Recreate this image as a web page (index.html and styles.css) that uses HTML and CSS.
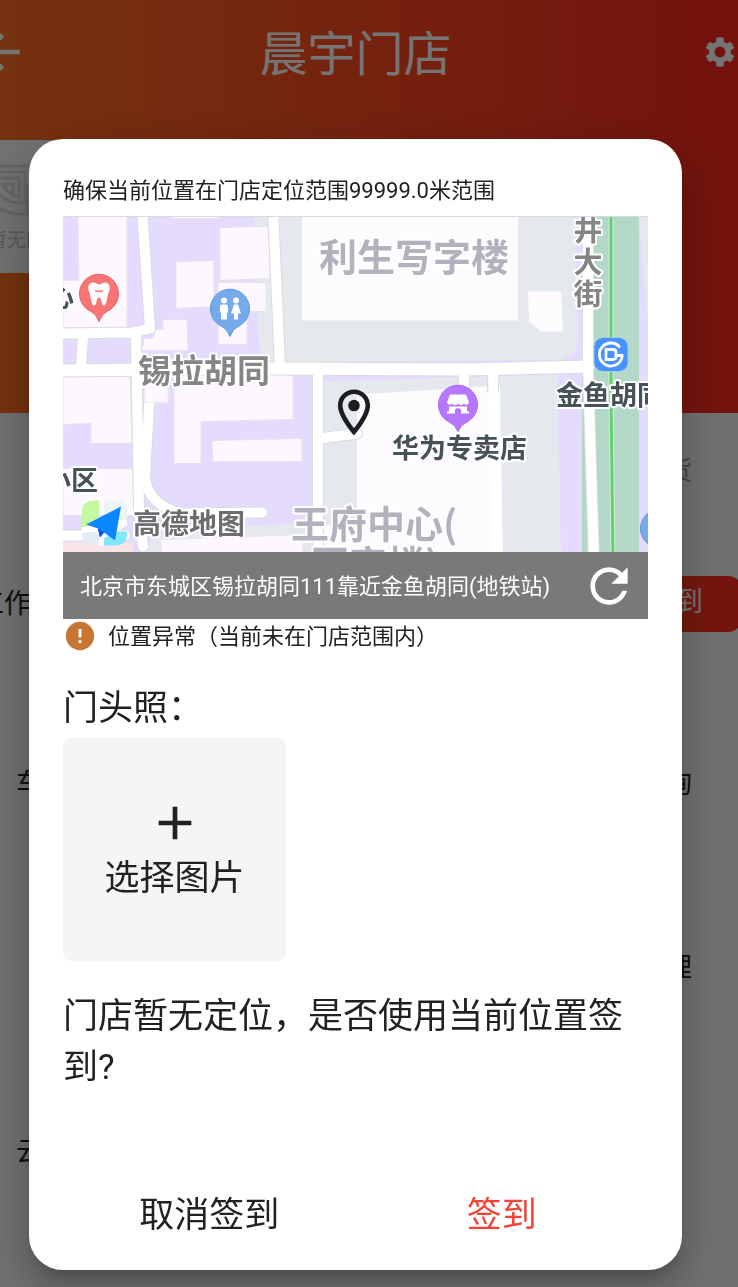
FILE: index.html
```
<!DOCTYPE html>
<html lang="zh-CN">
<head>
<meta charset="utf-8">
<meta name="viewport" content="width=device-width, initial-scale=1">
<title>晨宇门店</title>
<link rel="stylesheet" href="styles.css">
</head>
<body>
<div class="page">
  <div class="hero">
    <header class="topbar">
      <a class="back" href="#" aria-label="返回"><svg viewBox="0 0 24 24"><path d="M20 11H7.83l5.59-5.59L12 4l-8 8 8 8 1.41-1.41L7.83 13H20v-2z"/></svg></a>
      <h1 class="title">晨宇门店</h1>
      <button class="settings" aria-label="设置"><svg viewBox="0 0 24 24"><path d="M19.14 12.94c.04-.3.06-.61.06-.94 0-.32-.02-.64-.07-.94l2.03-1.58a.49.49 0 0 0 .12-.61l-1.92-3.32a.488.488 0 0 0-.59-.22l-2.39.96c-.5-.38-1.03-.7-1.62-.94l-.36-2.54a.484.484 0 0 0-.48-.41h-3.84c-.24 0-.43.17-.47.41l-.36 2.54c-.59.24-1.13.57-1.62.94l-2.39-.96c-.22-.08-.47 0-.59.22L2.74 8.87c-.12.21-.08.47.12.61l2.03 1.58c-.05.3-.09.63-.09.94s.02.64.07.94l-2.03 1.58a.49.49 0 0 0-.12.61l1.92 3.32c.12.22.37.29.59.22l2.39-.96c.5.38 1.03.7 1.62.94l.36 2.54c.05.24.24.41.48.41h3.84c.24 0 .44-.17.47-.41l.36-2.54c.59-.24 1.13-.56 1.62-.94l2.39.96c.22.08.47 0 .59-.22l1.92-3.32c.12-.22.07-.47-.12-.61l-2.01-1.58zM12 15.6c-1.98 0-3.6-1.62-3.6-3.6s1.62-3.6 3.6-3.6 3.6 1.62 3.6 3.6-1.62 3.6-3.6 3.6z"/></svg></button>
    </header>
    <div class="thumb">
      <svg class="thumb-art" viewBox="0 0 90 56"><path d="M0 5H90M0 11H44V38Q44 43 36 42Q22 40 16 30M0 17H38V36Q26 34 22 23H32V34M10 40Q20 54 46 53V24M52 53V11H90M58 53V17H90M46 53H90"/></svg>
      <span>暂无图片</span>
    </div>
  </div>
  <div class="tabs"><span>货</span></div>
  <div class="work"><span>工作</span><button class="work-btn">签到</button></div>
  <div class="menu">
    <div class="menu-row"><span>车</span><span>询</span></div>
    <div class="menu-row"><span></span><span>理</span></div>
    <div class="menu-row"><span>云</span><span></span></div>
  </div>
</div>

<div class="overlay">
  <div class="dialog" role="dialog" aria-modal="true">
    <p class="hint">确保当前位置在门店定位范围99999.0米范围</p>
    <div class="map">
      <svg class="map-view" viewBox="0 0 585 336" preserveAspectRatio="xMidYMid slice" role="img" aria-label="地图">
        <rect width="585" height="336" fill="#e5dbff"/>
        <g fill="#e5e9ee">
          <path d="M191 0H512L515 121 512 134 499 143 225 146H197Z"/>
          <path d="M576 0H585V108Z"/>
          <path d="M260 165 494 158 498 336H82L89 321 192 309 260 306Z"/>
        </g>
        <path d="M521 0H576V336H519V155Z" fill="#b4d8c7"/>
        <g fill="#fdf7ff" stroke="#e7e4ea">
          <path d="M15 0H64V115L0 111V64H16Z"/>
          <path d="M109-2H155V2H109Z"/>
          <path d="M113 45 151 44V90L113 92Z"/>
          <path d="M157 11 206 10 207 62 157 64Z"/>
          <path d="M155 66H203V95H184V128H155Z"/>
          <path d="M100 103H124L125 134H79L81 122H90L92 113H100Z"/>
          <path d="M0 160 67 158 69 227H28V207L0 208Z"/>
          <path d="M111 158H230V203L138 205V247H111Z"/>
          <path d="M149 224 239 222V245H150Z"/>
          <path d="M0 252H70L73 299H0Z"/>
          <path d="M98 323 240 318V338H98Z"/>
        </g>
        <g fill="#fefbff">
          <path d="M239 0H455V104H239Z"/>
          <path d="M465 75H498L500 115H478L466 105Z"/>
          <path d="M294 178 437 169 440 336H260V309L294 305Z"/>
        </g>
        <path d="M0 326H70V336H0Z" fill="#f8e3e6"/>
        <g fill="none" stroke-linejoin="round" stroke-linecap="round">
          <g stroke="#d9dbe1" stroke-width="12">
            <path d="M79-8 87 112 70 116-8 117M73 118 76 294 80 330M91 166 86 190 82 258Q83 282 105 292L115 297 199 296M20 120 18 150M210-8 217 150M255 156V345M256 222 294 217M401 155V170M430 155V174M525-8V150L531 345M-8 319H62"/>
            <path d="M-8 154 200 152 405 153 525 150" stroke-width="14"/>
          </g>
          <g stroke="#fff" stroke-width="10">
            <path d="M79-8 87 112 70 116-8 117M73 118 76 294 80 330M91 166 86 190 82 258Q83 282 105 292L115 297 199 296M20 120 18 150M210-8 217 150M255 156V345M256 222 294 217M401 155V170M430 155 433 345M525-8V150L531 345M-8 319H62"/>
            <path d="M-8 154 200 152 405 153 525 150" stroke-width="12"/>
          </g>
          <path d="M82 167H105V186H82Z" fill="#fdf7ff" stroke="#eeeaf0"/>
          <path d="M548-5V180L550 345" stroke="#d5ecd9" stroke-width="5"/>
          <path d="M548-5V180L550 345" stroke="#63d06e" stroke-width="3"/>
        </g>

        <g class="label-area">
          <text x="256" y="54">利生写字楼</text>
          <text x="228" y="321">王府中心(</text>
          <text x="248" y="361">写字楼)</text>
        </g>
        <g class="label-road">
          <text x="75" y="166">锡拉胡同</text>
          <g class="label-street"><text x="525" y="24">井</text><text x="525" y="56">大</text><text x="525" y="88">街</text></g>
        </g>
        <g class="label-poi">
          <text x="-16" y="90">心</text>
          <text x="-19" y="273">小区</text>
          <text x="329" y="241">华为专卖店</text>
          <text x="493" y="188">金鱼胡同</text>
        </g>

        <g transform="translate(36 77)">
          <path d="M0 28Q-3 20-8 18A19.500 19.500 0 1 1 8 18Q3 20 0 28Z" fill="#f97474" stroke="#e26565"/>
          <path d="M-6-11C-10-11-12-7-10-2-8 2-8 12-5 12-2 12-3 4 0 4S2 12 5 12C8 12 8 2 10-2 12-7 10-11 6-11 3-11 2-9 0-9S-3-11-6-11Z" fill="#fff"/>
          <path d="M-4-3Q0-1 4-3" fill="none" stroke="#f97474" stroke-width="1.500"/>
        </g>
        <g transform="translate(167 92)">
          <path d="M0 28Q-3 20-8 18A19.500 19.500 0 1 1 8 18Q3 20 0 28Z" fill="#75abed" stroke="#6095d8"/>
          <g fill="#fff"><circle cx="-6" cy="-8" r="3"/><circle cx="6" cy="-8" r="3"/><path d="M-10-2Q-10-4-8-4H-4Q-2-4-2-2V4H-3V11H-9V4H-10ZM4-4H8L11 5H8V11H4V5H1Z"/></g>
        </g>
        <g transform="translate(395 188)">
          <path d="M0 27Q-3 20-8 18A19.500 19.500 0 1 1 8 18Q3 20 0 27Z" fill="#b776ff" stroke="#a667ed"/>
          <path d="M-8-10H8L11-2Q9 2 6-1 3 2 0-1-3 2-6-1-9 2-11-2ZM-9 2H9V7H11V9H3V5Q0 2-3 5V9H-11V7H-9Z" fill="#fff"/>
        </g>
        <g transform="translate(548 138)">
          <rect x="-17" y="-17" width="34" height="34" rx="9" fill="#4691fb" stroke="#9bd0df"/>
          <path d="M9-7A11.500 11.500 0 1 0 11 3L11 1H5M-5-5H2Q5-5 5-2V2Q5 5 2 5H-5Z" fill="none" stroke="#fff" stroke-width="2.800"/>
        </g>
        <g transform="translate(597 312)">
          <circle r="19.500" fill="#75abed" stroke="#6095d8"/><circle cx="-8" cy="-5" r="3" fill="#fff"/><path d="M-12 0H-4V5H-10Z" fill="#fff"/>
        </g>
        <g transform="translate(263.400 168.400) scale(2.300)" fill="#1c1d1f">
          <path d="M12 2C8.130 2 5 5.130 5 9c0 5.250 7 13 7 13s7-7.750 7-13c0-3.870-3.130-7-7-7zM7 9c0-2.760 2.240-5 5-5s5 2.240 5 5c0 2.880-2.880 7.190-5 9.880C9.920 16.210 7 11.850 7 9z"/><circle cx="12" cy="9" r="2.500"/>
        </g>

        <g transform="translate(19 284)">
          <path d="M12 0H17V29H0V12Q0 0 12 0Z" fill="#c4f9a0"/>
          <path d="M22 0H33Q45 0 45 12V22L22 32Z" fill="#e9f4f3"/>
          <path d="M0 33 17 28V45H12Q0 45 0 33Z" fill="#e3edf3"/>
          <path d="M22 31H45V33Q45 45 33 45H22Z" fill="#82e6ff"/>
          <path d="M0 27 22 21 45 19V25L22 38V45H17V32L0 31Z" fill="#fff"/>
          <path d="M39 6 4 24 16 28 18 37 22 32 33 40Z" fill="#0a87ff"/>
          <path d="M16 28 18 37 22 32Z" fill="#0755d3"/>
        </g>
        <text class="label-brand" x="70" y="317">高德地图</text>
      </svg>
      <div class="address">
        <span class="address-text">北京市东城区锡拉胡同111靠近金鱼胡同(地铁站)</span>
        <button class="refresh" aria-label="刷新"><svg viewBox="0 0 24 24"><path d="M17.650 6.350C16.200 4.900 14.210 4 12 4c-4.420 0-7.990 3.580-7.990 8s3.570 8 7.990 8c3.730 0 6.840-2.550 7.730-6h-2.080c-.82 2.330-3.040 4-5.650 4-3.310 0-6-2.690-6-6s2.690-6 6-6c1.660 0 3.140.69 4.220 1.780L13 11h7V4l-2.350 2.350z"/></svg></button>
      </div>
    </div>
    <p class="alert">
      <svg class="alert-icon" viewBox="0 0 24 24"><path d="M12 2C6.480 2 2 6.480 2 12s4.480 10 10 10 10-4.480 10-10S17.520 2 12 2zm1 15h-2v-2h2v2zm0-4h-2V7h2v6z"/></svg>
      <span>位置异常（当前未在门店范围内）</span>
    </p>
    <h2 class="field-label">门头照：</h2>
    <button class="picker">
      <svg class="picker-icon" viewBox="0 0 24 24"><path d="M19 13h-6v6h-2v-6H5v-2h6V5h2v6h6v2z"/></svg>
      <span>选择图片</span>
    </button>
    <p class="message">门店暂无定位，是否使用当前位置签到?</p>
    <div class="actions">
      <button class="action">取消签到</button>
      <button class="action action-primary">签到</button>
    </div>
  </div>
</div>
</body>
</html>
```
FILE: styles.css
```
* { box-sizing: border-box; }
html, body { margin: 0; height: 100%; overflow: hidden; }
body {
  font-family: Roboto, "Noto Sans CJK SC", sans-serif;
  color: #212121;
  background: #f5f5f5;
}
h1, h2, p { margin: 0; font-weight: 400; }
button {
  border: 0;
  padding: 0;
  background: none;
  color: inherit;
  font: inherit;
  cursor: pointer;
}
svg { display: block; fill: currentColor; }

/* Store page; its left edge is scrolled out of view */
.page { margin-left: -27px; font-size: 27px; }
.hero {
  min-height: 413px;
  background: linear-gradient(90deg, #ff7022, #fd281e);
}
.topbar {
  display: grid;
  grid-template-columns: 56px 1fr 56px;
  align-items: center;
  height: 140px;
  padding-bottom: 36px;
  color: #fff;
}
.back { color: inherit; }
.back svg { width: 56px; height: 56px; }
.title { padding-top: 6px; font-size: 48px; line-height: 56px; text-align: center; }
.settings { justify-self: end; }
.settings svg { width: 36px; height: 36px; }
.thumb {
  display: flex;
  flex-direction: column;
  align-items: center;
  justify-content: center;
  gap: 8px;
  width: 106px;
  height: 133px;
  background: #f5faf8;
  color: #bdc1bf;
  font-size: 19px;
}
.thumb-art {
  width: 90px;
  height: 56px;
  fill: none;
  stroke: #d8dddb;
  stroke-width: 3;
}
.tabs {
  display: flex;
  align-items: center;
  justify-content: flex-end;
  height: 114px;
  padding: 0 46px 4px 0;
  color: #999;
}
.work {
  display: flex;
  align-items: center;
  justify-content: space-between;
  height: 154px;
  margin-right: -4px;
  padding-left: 4px;
  line-height: 52px;
}
.work-btn {
  width: 132px;
  height: 56px;
  padding-bottom: 4px;
  border-radius: 14px;
  background: linear-gradient(90deg, #ff5022, #fd281e);
  color: #fff;
}
.menu { padding-top: 8px; }
.menu-row {
  display: flex;
  align-items: center;
  justify-content: space-between;
  height: 184px;
  padding: 0 46px 0 43px;
}

/* Check-in dialog */
.overlay {
  position: fixed;
  inset: 0;
  padding: 139px 56px 17px 29px;
  background: rgba(0, 0, 0, .54);
}
.dialog {
  padding: 35px 34px 21px;
  border-radius: 34px;
  background: #fff;
  box-shadow: 0 11px 15px -7px rgba(0, 0, 0, .2), 0 24px 38px 3px rgba(0, 0, 0, .14), 0 9px 46px 8px rgba(0, 0, 0, .12);
  font-size: 35px;
  line-height: 51px;
}
.hint { font-size: 22px; line-height: 34px; }
.map { margin-top: 8px; }
.map-view { width: 100%; height: 336px; border-top: 1px solid #d9dbde; }
.map-view text {
  font-family: "Noto Sans CJK SC", sans-serif;
  font-weight: 700;
  stroke: #fff;
  stroke-width: 4px;
  stroke-linejoin: round;
  paint-order: stroke;
}
.label-area { font-size: 38px; fill: #b4b1be; }
.label-road { font-size: 33px; fill: #858585; }
.label-street { font-size: 29px; text-anchor: middle; }
.label-poi { font-size: 27px; fill: #465158; }
.label-brand { font-size: 28px; fill: #6d6d70; }
.address {
  display: flex;
  align-items: center;
  justify-content: space-between;
  height: 67px;
  padding: 0 11px 0 17px;
  background: #77797b;
  color: #fff;
  font-size: 22px;
}
.address-text { padding-top: 2px; }
.refresh svg { width: 56px; height: 56px; }
.alert {
  display: flex;
  align-items: center;
  gap: 11px;
  font-size: 22px;
  line-height: 32px;
}
.alert span { padding-top: 2px; }
.alert-icon { width: 34px; height: 34px; fill: #c87533; }
.field-label { margin: 30px 0 4px; font-size: 35px; }
.picker {
  display: flex;
  flex-direction: column;
  align-items: center;
  justify-content: center;
  gap: 2px;
  width: 223px;
  height: 223px;
  border-radius: 8px;
  background: #f5f5f5;
}
.picker-icon { width: 56px; height: 56px; }
.message { margin-top: 30px; }
.actions {
  display: grid;
  grid-template-columns: 1fr 1fr;
  margin-top: 88px;
}
.action { height: 68px; }
.action-primary { color: #f44336; }
```
